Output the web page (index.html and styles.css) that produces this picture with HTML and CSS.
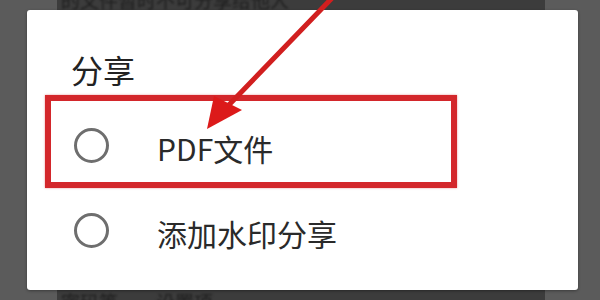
FILE: index.html
```html
<!DOCTYPE html>
<html lang="zh-CN">
<head>
<meta charset="utf-8">
<title>分享</title>
<link rel="stylesheet" href="styles.css">
</head>
<body>
<div class="screen">
  <div class="backdrop">
    <div class="bg-line bg-top">的文件暂时不可分享给他人</div>
    <div class="bg-line bg-bottom">密码等　　设置项</div>
  </div>

  <div class="dialog">
    <div class="title">分享</div>
    <ul class="options">
      <li class="option">
        <span class="radio"></span>
        <span class="label">PDF文件</span>
      </li>
      <li class="option">
        <span class="radio"></span>
        <span class="label">添加水印分享</span>
      </li>
    </ul>
  </div>

  <div class="highlight-box"></div>
  <svg class="arrow" width="600" height="300" viewBox="0 0 600 300" aria-hidden="true">
    <line x1="334" y1="-4" x2="224" y2="110" stroke="#d11f1f" stroke-width="5" stroke-linecap="round"/>
    <polygon points="207,129 214,96 242,110" fill="#dc1a1a"/>
  </svg>
</div>
</body>
</html>
```

FILE: styles.css
```css
* {
  box-sizing: border-box;
}

html, body {
  margin: 0;
  padding: 0;
}

body {
  width: 600px;
  height: 300px;
  overflow: hidden;
  font-family: "Noto Sans CJK SC", "Noto Sans", sans-serif;
}

.screen {
  position: relative;
  width: 600px;
  height: 300px;
  background: #5b5b5b;
  display: flex;
}

.backdrop {
  margin: 0 55px 0 57px;
  flex: 1;
  background: #3c3c3c;
  display: flex;
  flex-direction: column;
  justify-content: space-between;
  overflow: hidden;
}

.bg-line {
  color: #1e1e1e;
  font-size: 19px;
  line-height: 24px;
  padding-left: 4px;
  filter: blur(0.8px);
}

.bg-top {
  margin-top: -12px;
}

.bg-bottom {
  margin-bottom: -14px;
}

.dialog {
  position: absolute;
  left: 27px;
  top: 10px;
  width: 551px;
  height: 280px;
  background: #ffffff;
  border-radius: 3px;
  box-shadow: 0 1px 3px rgba(0, 0, 0, 0.35);
  padding-top: 39px;
}

.title {
  margin-left: 44px;
  font-size: 32px;
  line-height: 40px;
  color: #222222;
}

.options {
  list-style: none;
  margin: 16px 0 0;
  padding: 0;
}

.option {
  height: 85px;
  display: flex;
  align-items: center;
  padding-left: 47px;
}

.radio {
  width: 35px;
  height: 35px;
  border: 3px solid #6e6e6e;
  border-radius: 50%;
  flex: none;
  margin-top: -4px;
}

.label {
  margin-left: 48px;
  font-size: 30px;
  line-height: 40px;
  color: #2a2a2a;
}

.highlight-box {
  position: absolute;
  left: 45px;
  top: 95px;
  width: 412px;
  height: 93px;
  border: 6px solid #d3272b;
  box-shadow: 0 0 2px rgba(211, 39, 43, 0.5);
}

.arrow {
  position: absolute;
  left: 0;
  top: 0;
  pointer-events: none;
}
```
